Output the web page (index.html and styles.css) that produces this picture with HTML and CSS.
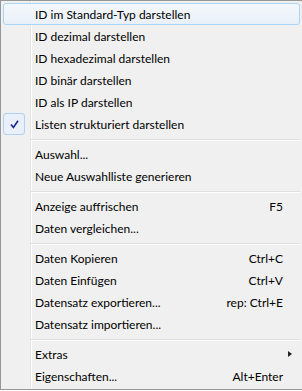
FILE: index.html
```html
<!DOCTYPE html>
<html lang="de">
<head>
    <meta charset="UTF-8">
    <meta name="viewport" content="width=device-width, initial-scale=1.0">
    <title>Kontextmenü</title>
    <link rel="stylesheet" href="styles.css">
</head>
<body>
    <div class="menu">
        <div class="item hover">ID im Standard-Typ darstellen</div>
        <div class="item">ID dezimal darstellen</div>
        <div class="item">ID hexadezimal darstellen</div>
        <div class="item">ID binär darstellen</div>
        <div class="item">ID als IP darstellen</div>
        <div class="item checked">
            <span class="check">
                <svg width="9" height="9" viewBox="0 0 9 9">
                    <path d="M1 4.5 L3.4 7.5 L8 0.8" fill="none" stroke="#14278a" stroke-width="1.6"/>
                </svg>
            </span>
            Listen strukturiert darstellen
        </div>
        <div class="sep"></div>
        <div class="item">Auswahl...</div>
        <div class="item">Neue Auswahlliste generieren</div>
        <div class="sep"></div>
        <div class="item">Anzeige auffrischen<span class="key">F5</span></div>
        <div class="item">Daten vergleichen...</div>
        <div class="sep"></div>
        <div class="item">Daten Kopieren<span class="key">Ctrl+C</span></div>
        <div class="item">Daten Einfügen<span class="key">Ctrl+V</span></div>
        <div class="item">Datensatz exportieren...<span class="key">rep: Ctrl+E</span></div>
        <div class="item">Datensatz importieren...</div>
        <div class="sep"></div>
        <div class="item">Extras<span class="arrow"></span></div>
        <div class="item">Eigenschaften...<span class="key">Alt+Enter</span></div>
    </div>
</body>
</html>
```

FILE: styles.css
```css
body {
    margin: 0;
    font-family: Lato, "Noto Sans", sans-serif;
    font-size: 12px;
    color: #000;
    background: #fff;
}
.menu {
    box-sizing: border-box;
    width: 302px;
    padding: 2px;
    border: 1px solid #979797;
    border-right: none;
    background-color: #f0f0f0;
    background-image: linear-gradient(to right, transparent 29px, #e2e3e3 29px, #e2e3e3 30px, #fff 30px, #fff 31px, transparent 31px);
    box-shadow: 0 2px 1px -1px rgba(0, 0, 0, 0.35);
}
.item {
    position: relative;
    display: flex;
    align-items: center;
    height: 22px;
    box-sizing: border-box;
    padding: 0 16px 0 31px;
    border: 1px solid transparent;
    border-radius: 3px;
    white-space: nowrap;
}
.item.hover {
    border-color: #a9d4f7;
    background: linear-gradient(#f4f8fc, #e9f0f8);
}
.key {
    margin-left: auto;
}
.arrow {
    margin-left: auto;
    margin-right: -9px;
    width: 0;
    height: 0;
    border-top: 3.5px solid transparent;
    border-bottom: 3.5px solid transparent;
    border-left: 4px solid #222;
}
.check {
    position: absolute;
    left: -1px;
    top: -1px;
    width: 22px;
    height: 22px;
    box-sizing: border-box;
    display: flex;
    align-items: center;
    justify-content: center;
    border: 1px solid #b1d0f2;
    border-radius: 3px;
    background: #e9f0f9;
}
.sep {
    height: 8px;
    margin-left: 28px;
    background: linear-gradient(transparent 4px, #e0e0e0 4px, #e0e0e0 5px, #fff 5px, #fff 6px, transparent 6px);
}
```
